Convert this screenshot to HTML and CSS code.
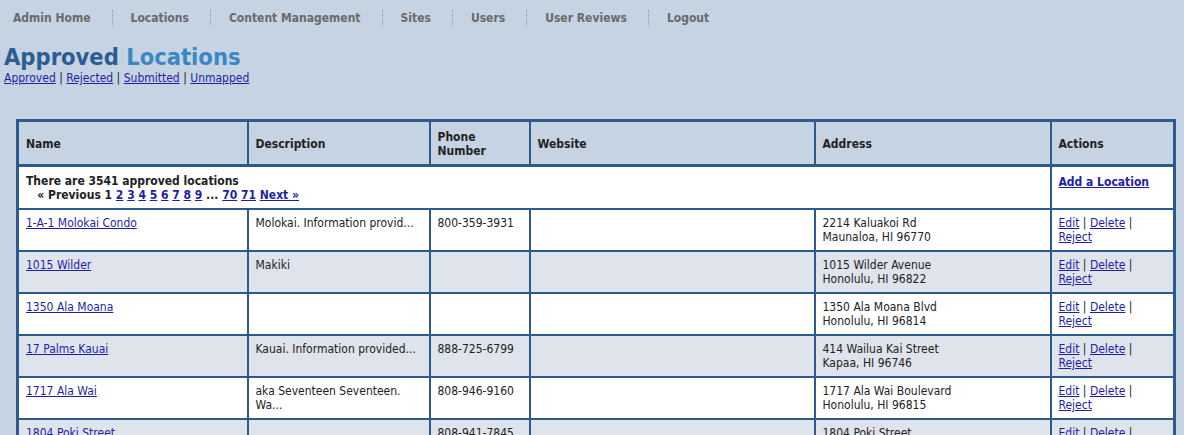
FILE: index.html
```html
<!DOCTYPE html>
<html lang="en">

<head>
    <meta charset="UTF-8">
    <title>Approved Locations</title>
    <link rel="stylesheet" href="styles.css">
</head>

<body>

    <!-- Top menu -->
    <ul class="menu">
        <li><a href="#">Admin Home</a></li>
        <li><a href="#">Locations</a></li>
        <li><a href="#">Content Management</a></li>
        <li><a href="#">Sites</a></li>
        <li><a href="#">Users</a></li>
        <li><a href="#">User Reviews</a></li>
        <li><a href="#">Logout</a></li>
    </ul>

    <h1><span class="dark">Approved</span> <span class="light">Locations</span></h1>
    <div class="sublinks">
        <a href="#">Approved</a> | <a href="#">Rejected</a> | <a href="#">Submitted</a> | <a href="#">Unmapped</a>
    </div>

    <table class="listing">
        <colgroup>
            <col class="c-name">
            <col class="c-desc">
            <col class="c-phone">
            <col class="c-web">
            <col class="c-addr">
            <col class="c-act">
        </colgroup>
        <tr>
            <th>Name</th>
            <th>Description</th>
            <th>Phone<br>Number</th>
            <th>Website</th>
            <th>Address</th>
            <th>Actions</th>
        </tr>
        <tr class="pager">
            <td colspan="5">
                There are 3541 approved locations<br>
                &nbsp;&nbsp;&nbsp;&laquo; Previous 1 <a href="#">2</a> <a href="#">3</a> <a href="#">4</a> <a href="#">5</a> <a href="#">6</a> <a href="#">7</a> <a href="#">8</a> <a href="#">9</a> ... <a href="#">70</a> <a href="#">71</a> <a href="#">Next &raquo;</a>
            </td>
            <td><a href="#">Add a Location</a></td>
        </tr>
        <tr>
            <td><a href="#">1-A-1 Molokai Condo</a></td>
            <td>Molokai. Information provid...</td>
            <td>800-359-3931</td>
            <td></td>
            <td>2214 Kaluakoi Rd<br>Maunaloa, HI 96770</td>
            <td><a href="#">Edit</a> | <a href="#">Delete</a> |<br><a href="#">Reject</a></td>
        </tr>
        <tr class="alt">
            <td><a href="#">1015 Wilder</a></td>
            <td>Makiki</td>
            <td></td>
            <td></td>
            <td>1015 Wilder Avenue<br>Honolulu, HI 96822</td>
            <td><a href="#">Edit</a> | <a href="#">Delete</a> |<br><a href="#">Reject</a></td>
        </tr>
        <tr>
            <td><a href="#">1350 Ala Moana</a></td>
            <td></td>
            <td></td>
            <td></td>
            <td>1350 Ala Moana Blvd<br>Honolulu, HI 96814</td>
            <td><a href="#">Edit</a> | <a href="#">Delete</a> |<br><a href="#">Reject</a></td>
        </tr>
        <tr class="alt">
            <td><a href="#">17 Palms Kauai</a></td>
            <td>Kauai. Information provided...</td>
            <td>888-725-6799</td>
            <td></td>
            <td>414 Wailua Kai Street<br>Kapaa, HI 96746</td>
            <td><a href="#">Edit</a> | <a href="#">Delete</a> |<br><a href="#">Reject</a></td>
        </tr>
        <tr>
            <td><a href="#">1717 Ala Wai</a></td>
            <td>aka Seventeen Seventeen.<br>Wa...</td>
            <td>808-946-9160</td>
            <td></td>
            <td>1717 Ala Wai Boulevard<br>Honolulu, HI 96815</td>
            <td><a href="#">Edit</a> | <a href="#">Delete</a> |<br><a href="#">Reject</a></td>
        </tr>
        <tr class="alt">
            <td><a href="#">1804 Poki Street</a></td>
            <td></td>
            <td>808-941-7845</td>
            <td></td>
            <td>1804 Poki Street<br>Honolulu, HI 96822</td>
            <td><a href="#">Edit</a> | <a href="#">Delete</a> |<br><a href="#">Reject</a></td>
        </tr>
    </table>

</body>

</html>
```

FILE: styles.css
```css
body {
    font-family: "DejaVu Sans Condensed", "DejaVu Sans", sans-serif;
    font-stretch: condensed;
    font-size: 12px;
    color: #222;
    background-color: #c5d3e2;
    margin: 0;
    padding: 0 4px;
}

a {
    color: #1f1fa3;
}

/* top menu */
.menu {
    list-style: none;
    display: flex;
    margin: 0;
    padding: 10px 0 0 0;
}

.menu li {
    padding: 0 21px 0 18px;
    border-left: 1px dotted #8c9cb0;
    height: 16px;
    line-height: 17px;
}

.menu li:first-child {
    border-left: none;
    padding-left: 9px;
}

.menu a {
    color: #6a6a6a;
    font-weight: bold;
    font-size: 12px;
    text-decoration: none;
}

h1 {
    font-size: 23.5px;
    margin: 17px 0 0 0;
    line-height: 28px;
}

h1 .dark {
    color: #2b5c93;
}

h1 .light {
    color: #3a87c5;
}

.sublinks {
    font-size: 12px;
    line-height: 14px;
    margin-bottom: 34px;
}

/* listing table */
.listing {
    border-collapse: collapse;
    table-layout: fixed;
    width: 1160px;
    margin-left: 12px;
    border: 3px solid #2c5a8e;
}

.c-name { width: 230px; }
.c-desc { width: 182px; }
.c-phone { width: 100px; }
.c-web { width: 285px; }
.c-addr { width: 236px; }
.c-act { width: 124px; }

.listing th,
.listing td {
    border: 2px solid #2c5a8e;
    padding: 6px 6px 6px 7px;
    text-align: left;
    vertical-align: top;
    line-height: 14px;
    height: 28px;
}

.listing th {
    background-color: #c5d3e2;
    vertical-align: middle;
    height: 29px;
    padding-top: 7px;
    border-bottom-width: 3px;
}

.listing td {
    background-color: #fff;
}

.listing tr.alt td {
    background-color: #dfe4ec;
}

.pager td {
    font-weight: bold;
    padding-top: 7px;
    padding-bottom: 5px;
}

.pager td:last-child {
    vertical-align: top;
    padding-top: 8px;
}
```
